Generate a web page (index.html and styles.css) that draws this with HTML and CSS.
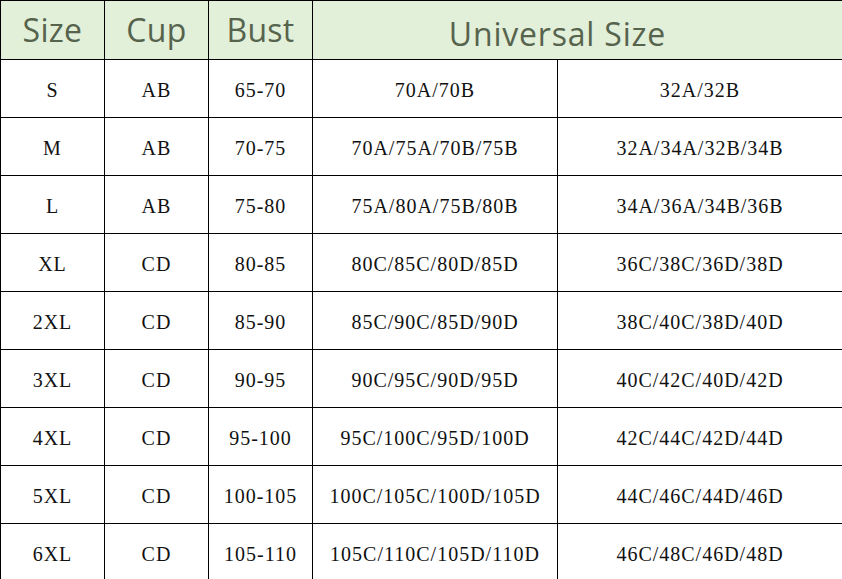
FILE: index.html
```html
<!DOCTYPE html>
<html>
<head>
<meta charset="utf-8">
<link rel="stylesheet" href="styles.css">
</head>
<body>
<div class="chart">
  <div class="hd">Size</div>
  <div class="hd">Cup</div>
  <div class="hd">Bust</div>
  <div class="hd span2 wide">Universal Size</div>

  <div class="cell">S</div><div class="cell">AB</div><div class="cell">65-70</div><div class="cell">70A/70B</div><div class="cell">32A/32B</div>
  <div class="cell">M</div><div class="cell">AB</div><div class="cell">70-75</div><div class="cell">70A/75A/70B/75B</div><div class="cell">32A/34A/32B/34B</div>
  <div class="cell">L</div><div class="cell">AB</div><div class="cell">75-80</div><div class="cell">75A/80A/75B/80B</div><div class="cell">34A/36A/34B/36B</div>
  <div class="cell">XL</div><div class="cell">CD</div><div class="cell">80-85</div><div class="cell">80C/85C/80D/85D</div><div class="cell">36C/38C/36D/38D</div>
  <div class="cell">2XL</div><div class="cell">CD</div><div class="cell">85-90</div><div class="cell">85C/90C/85D/90D</div><div class="cell">38C/40C/38D/40D</div>
  <div class="cell">3XL</div><div class="cell">CD</div><div class="cell">90-95</div><div class="cell">90C/95C/90D/95D</div><div class="cell">40C/42C/40D/42D</div>
  <div class="cell">4XL</div><div class="cell">CD</div><div class="cell">95-100</div><div class="cell">95C/100C/95D/100D</div><div class="cell">42C/44C/42D/44D</div>
  <div class="cell">5XL</div><div class="cell">CD</div><div class="cell">100-105</div><div class="cell">100C/105C/100D/105D</div><div class="cell">44C/46C/44D/46D</div>
  <div class="cell">6XL</div><div class="cell">CD</div><div class="cell">105-110</div><div class="cell">105C/110C/105D/110D</div><div class="cell">46C/48C/46D/48D</div>
</div>
</body>
</html>
```
FILE: styles.css
```css
html, body {
  margin: 0;
  padding: 0;
  background: #ffffff;
  overflow: hidden;
}
.chart {
  display: grid;
  grid-template-columns: 103px 103px 103px 244px 284px;
  grid-template-rows: 58px repeat(9, 57px);
  gap: 1px;
  padding: 1px 0 0 1px;
  background: #000000;
  width: 842px;
  box-sizing: border-box;
}
.hd {
  background: #e2efd9;
  color: #56634d;
  font-family: "Open Sans", "DejaVu Sans", sans-serif;
  font-size: 32px;
  letter-spacing: 0.3px;
  display: flex;
  align-items: center;
  justify-content: center;
  padding-bottom: 2px;
  box-sizing: border-box;
}
.span2 {
  grid-column: span 2;
}
.wide {
  padding-top: 6px;
  padding-bottom: 0;
  padding-right: 40px;
  letter-spacing: 0.8px;
}
.cell {
  background: #ffffff;
  color: #111111;
  font-family: "Liberation Serif", "Times New Roman", serif;
  font-size: 20px;
  letter-spacing: 1px;
  display: flex;
  align-items: center;
  justify-content: center;
  padding-top: 4px;
  box-sizing: border-box;
}
```
